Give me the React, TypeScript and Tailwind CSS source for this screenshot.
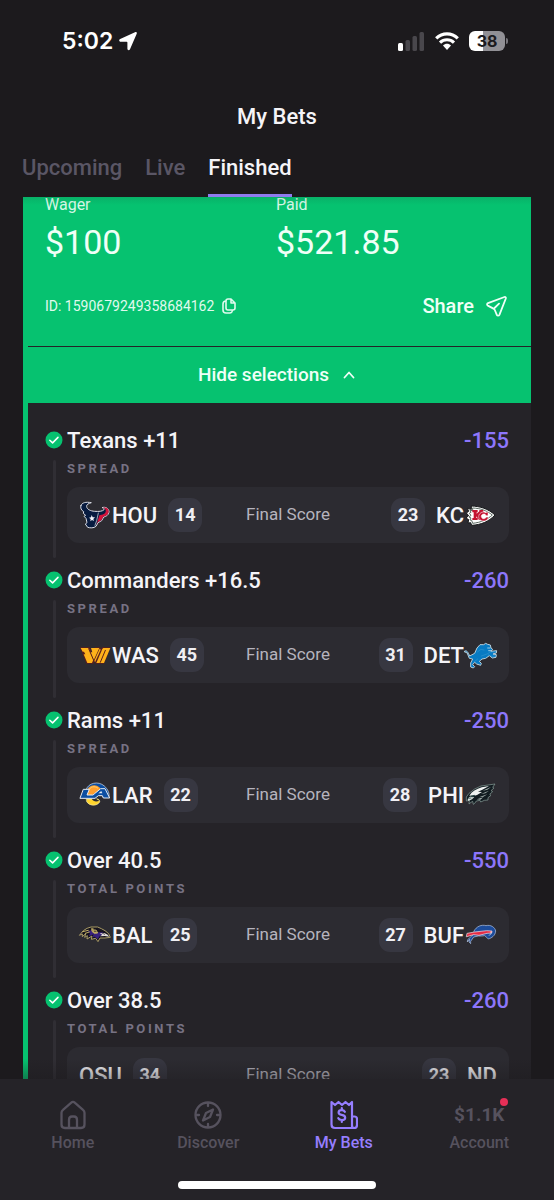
import type { ReactNode } from "react";

function Logo({ children }: { children: ReactNode }) {
  return (
    <svg viewBox="0 0 96 96" className="size-8 shrink-0 overflow-visible" aria-hidden="true" strokeLinejoin="round" strokeLinecap="round">
      {children}
    </svg>
  );
}

function Texans() {
  return (
    <Logo>
      <path d="M6 19 C9 11 20 8 37 11 C28 14 22 16 23 23 C24 31 34 36 47 37 C59 38 71 37 75 32 C78 28 74 26 69 26 C80 22 90 29 90 39 C89 48 82 52 74 54 L68 65 L57 71 L51 82 C44 88 33 87 26 85 L19 75 L24 71 L21 58 L15 52 L20 49 L13 43 L14 38 C7 34 3 27 6 19Z" fill="#071b40" stroke="#d9dbe4" strokeWidth="3" />
      <path d="M52 78 L56 66 L61 49 C72 46 82 44 80 33 C79 29 76 27 72 26 C83 23 90 30 89 39 C88 47 82 51 73 53 L67 64 L57 69Z" fill="#d3133b" />
      <path d="M58 42 L53 65 L48 79" fill="none" stroke="#e8e9ef" strokeWidth="2" />
      <path d="M38 48 L41 55 L48 55 L43 60 L45 66 L39 63 L34 67 L35 60 L30 56 L36 55Z" fill="#f4f5fa" />
    </Logo>
  );
}

function Chiefs() {
  return (
    <Logo>
      <path d="M20 21 C46 22 69 29 90 48 C70 69 48 77 20 79 L17 71 L9 72 L11 62 L3 57 L11 50 L4 42 L11 37 L7 28 L18 31Z" fill="#fff" stroke="#17191a" strokeWidth="3" />
      <path d="M24 27 C47 28 64 34 82 48 C66 62 49 70 23 73 L20 64 L15 63 L18 57 L12 54 L18 49 L13 43 L18 40 L15 34 L22 35Z" fill="#fff" stroke="#5c6a61" strokeWidth="3" />
      <path d="M22 33 H38 V40 H35 V44 L43 37 V33 H55 V40 H51 L42 48 L52 57 V63 H42 L34 52 V57 H38 V63 H22 V57 H26 V40 H22Z" fill="#c41230" />
      <path d="M69 40 V50 H63 C62 44 54 43 50 48 C47 54 50 60 56 59 C60 59 63 57 63 54 H70 C69 63 62 67 54 66 C43 65 38 55 43 46 C48 38 58 37 63 42 L65 39Z" fill="#c41230" stroke="#fff" strokeWidth="1.5" />
    </Logo>
  );
}

function Commanders() {
  return (
    <Logo>
      <path d="M3 25 H33 L40 44 L48 25 H64 L66 30 L69 25 H95 L75 74 H50 L47 67 L43 74 H22Z" fill="#5a1f1c" />
      <path d="M5 27 H29 L43 62 L39 72 H25 L14 46 H19 L15 38 H11Z" fill="#ffb21a" />
      <path d="M36 27 H61 L44 64 L34 40 H40Z" fill="#ffb21a" />
      <path d="M73 27 H94 L75 72 H52 L70 30Z" fill="#ffb21a" />
      <path d="M65 32 L48 70 L46 65 L62 29Z" fill="#ffb21a" />
      <path d="M29 29 L45 66 M79 34 L64 70" stroke="#5a1f1c" strokeWidth="3" />
    </Logo>
  );
}

function Lions() {
  return (
    <Logo>
      <path d="M-2 37 C6 31 10 42 14 51 L29 43 L36 27 L45 17 L56 17 L62 13 L68 16 L76 18 L78 27 L83 31 L78 37 L95 35 L94 42 L84 45 L94 47 L93 55 L82 57 L73 50 L62 58 L51 60 L43 67 L49 73 L47 79 L35 75 L29 70 L23 77 L29 83 L25 87 L17 84 L17 72 L23 60 L13 58 L7 43Z" fill="#087bc3" stroke="#b8ced9" strokeWidth="3" />
      <path d="M37 39 L48 31 L57 33 M49 51 L66 45 L76 39 L90 39 M70 47 L80 52 L89 51 M38 60 L27 69" fill="none" stroke="#3c9bd0" strokeWidth="1.5" />
      <path d="M68 27 L75 27 M71 35 L78 35" stroke="#e8f4f8" strokeWidth="2" />
    </Logo>
  );
}

function Rams() {
  return (
    <Logo>
      <path d="M21 33 C27 11 58 5 76 21 C87 31 92 43 90 55 H72 C73 42 66 32 54 29 C43 27 31 31 21 36Z" fill="#0b4ea2" stroke="#dfe6ef" strokeWidth="2" />
      <path d="M22 42 C24 20 47 12 61 25 C66 30 66 35 62 38 L45 44 L30 55 C24 53 21 49 22 42Z" fill="#ff9f2e" />
      <path d="M28 35 C34 22 47 20 56 27" fill="none" stroke="#ffd36b" strokeWidth="3" />
      <path d="M23 60 H57 C60 62 63 65 62 69 C54 82 31 82 23 68Z" fill="#ffd52e" stroke="#f7ecae" strokeWidth="2" />
      <path d="M38 59 C43 68 52 69 61 65 C51 62 49 57 49 52Z" fill="#2c2b31" />
      <path d="M14 31 H31 L24 48 H42 L65 29 H78 L92 57 H73 L70 50 H58 L48 58 H4Z" fill="#0b4ea2" stroke="#e4ebf3" strokeWidth="3" />
      <path d="M58 43 L67 36 L70 43Z" fill="#e4ebf3" />
    </Logo>
  );
}

function Eagles() {
  return (
    <Logo>
      <path d="M4 65 L4 54 L12 43 L29 30 L48 21 L90 15 L83 25 L87 27 L78 35 L83 38 L74 46 L78 49 L69 56 L69 63 L58 64 L47 69 L45 64 L34 66 L29 73 L25 76 L23 67 L18 70 L12 75 L13 65Z" fill="#111b20" stroke="#8ca39d" strokeWidth="2" />
      <path d="M13 50 C20 38 34 30 50 25 L72 21 L52 32 L39 38 L51 39 L36 48 L26 51Z" fill="#eff2f1" />
      <path d="M53 35 L78 24 L67 32Z M48 45 L72 35 L61 43Z M42 55 L67 46 L55 53Z M35 61 L55 55 L46 62Z" fill="#a9b5b2" />
      <path d="M8 61 C12 52 20 50 28 54 L21 61 L10 66Z" fill="#d6dddb" />
      <path d="M18 51 L29 49 L25 53Z M11 58 L18 57" fill="#0b2a2c" stroke="#0b2a2c" strokeWidth="2" />
    </Logo>
  );
}

function Ravens() {
  return (
    <Logo>
      <path d="M2 48 L13 35 L24 28 L36 24 L56 24 L67 29 L78 35 L89 44 L94 55 L78 57 L63 57 L57 68 L50 58 L37 61 L39 51 L24 60 L25 50 L17 55 L20 44 L10 53 L10 46Z" fill="#15121c" stroke="#a99b65" strokeWidth="3" />
      <path d="M26 37 L47 31 L56 40 L71 40 L79 48 L63 50 L56 61 L48 53 L40 55 L44 46 L30 52 L33 43Z" fill="#38217c" />
      <path d="M62 43 L76 42 L86 47 L91 53 L77 51 L63 52 L70 47Z" fill="#e5e0dc" />
      <path d="M11 38 L28 34 M19 43 L31 39 M39 29 L51 33 L56 42 L46 43 L40 38Z" fill="#b9a75c" stroke="#c1ae65" strokeWidth="3" />
      <path d="M45 32 H51 M46 37 H51 M57 30 L69 36 M69 42 L77 46" stroke="#211a28" strokeWidth="2" />
    </Logo>
  );
}

function Bills() {
  return (
    <Logo>
      <path d="M27 36 C34 22 50 16 63 20 C77 16 90 25 92 36 C91 50 80 57 70 60 L65 55 L59 50 L50 51 L40 51 L26 54 L17 67 L17 74 L12 69 L14 61 L7 69 L8 62 L20 51 L30 43Z" fill="#1d4c9b" stroke="#b9c7e0" strokeWidth="2" />
      <path d="M7 43 L29 39 L65 35 L81 36 L80 42 L66 43 L42 49 L26 47 L5 53Z" fill="#e52b43" stroke="#f5eaf0" strokeWidth="2" />
      <path d="M78 38 V44 L73 49" fill="none" stroke="#fff" strokeWidth="2" />
    </Logo>
  );
}

type Team = { code: string; score: number; logo?: ReactNode };
type Selection = { title: string; market: string; odds: string; away: Team; home: Team };

const selections: Selection[] = [
  { title: "Texans +11", market: "SPREAD", odds: "-155", away: { code: "HOU", score: 14, logo: <Texans /> }, home: { code: "KC", score: 23, logo: <Chiefs /> } },
  { title: "Commanders +16.5", market: "SPREAD", odds: "-260", away: { code: "WAS", score: 45, logo: <Commanders /> }, home: { code: "DET", score: 31, logo: <Lions /> } },
  { title: "Rams +11", market: "SPREAD", odds: "-250", away: { code: "LAR", score: 22, logo: <Rams /> }, home: { code: "PHI", score: 28, logo: <Eagles /> } },
  { title: "Over 40.5", market: "TOTAL POINTS", odds: "-550", away: { code: "BAL", score: 25, logo: <Ravens /> }, home: { code: "BUF", score: 27, logo: <Bills /> } },
  { title: "Over 38.5", market: "TOTAL POINTS", odds: "-260", away: { code: "OSU", score: 34 }, home: { code: "ND", score: 23 } },
];

function Score({ value }: { value: number }) {
  return (
    <span className="flex size-[34px] items-center justify-center rounded-[11px] bg-[#373741] text-lg font-bold text-[#f0eff4]">{value}</span>
  );
}

function SelectionRow({ item }: { item: Selection }) {
  return (
    <li className="flex h-[140px] gap-1 pl-[17px] pr-[22px]">
      <div className="flex w-[18px] shrink-0 flex-col items-center">
        <div className="flex h-7 items-center">
          <svg viewBox="0 0 18 18" className="size-[18px]" aria-label="Won">
            <circle cx="9" cy="9" r="8.5" fill="#06c270" />
            <path d="m4.8 9.2 2.8 2.7 5.4-5.5" fill="none" stroke="#fff" strokeWidth="1.5" strokeLinecap="round" strokeLinejoin="round" />
          </svg>
        </div>
        <div className="mb-2 mt-[6px] w-[3px] flex-1 rounded-full bg-[#302e34]" />
      </div>
      <div className="min-w-0 flex-1">
        <div className="flex h-7 items-center justify-between text-[22px] font-medium">
          <h2 className="text-[#f5f4f8]">{item.title}</h2>
          <span className="text-[#8d76fb]">{item.odds}</span>
        </div>
        <p className="h-[33px] pt-[5px] text-[13px] font-bold leading-5 tracking-[0.2em] text-[#777284]">{item.market}</p>
        <div className="grid h-14 grid-cols-[1fr_auto_1fr] items-center rounded-xl bg-[#2c2b31] px-3">
          <div className="flex items-center gap-[11px]">
            <span className="flex items-center gap-px text-[22px] font-medium text-[#f5f4f8]">{item.away.logo}{item.away.code}</span>
            <Score value={item.away.score} />
          </div>
          <span className="text-[17px] text-[#b6b4be]">Final Score</span>
          <div className="flex items-center justify-end gap-[11px]">
            <Score value={item.home.score} />
            <span className="flex items-center gap-px text-[22px] font-medium text-[#f5f4f8]">{item.home.code}{item.home.logo}</span>
          </div>
        </div>
      </div>
    </li>
  );
}

function StatusBar() {
  return (
    <div className="flex h-[82px] shrink-0 items-center justify-between pl-[62px] pr-[46px] text-white">
      <div className="flex items-center gap-[6px] font-['Inter',sans-serif] text-[23px] font-semibold">
        <span>5:02</span>
        <svg viewBox="0 0 18 20" className="h-5 w-[18px]" aria-hidden="true">
          <path d="M16 1.2C17.3.6 18.2 1.5 17.7 2.8L11 18.2C10.3 19.7 8.4 19.4 8.4 17.8V11.5Q8.4 10.7 7.6 10.7H1.8C0 10.7-.4 8.9 1.2 8.1Z" fill="currentColor" />
        </svg>
      </div>
      <div className="flex items-center gap-[10px]">
        <svg viewBox="0 0 27 19" className="h-[19px] w-[27px]" aria-label="Signal">
          <rect y="11" width="5" height="8" rx="1.5" fill="#fff" />
          <rect x="7.5" y="8" width="4.5" height="11" rx="1.5" fill="#49474c" />
          <rect x="14.5" y="4" width="4.5" height="15" rx="1.5" fill="#49474c" />
          <rect x="21.5" width="4.5" height="19" rx="1.5" fill="#49474c" />
        </svg>
        <svg viewBox="0 0 24 19" className="h-[19px] w-6" fill="none" stroke="#fff" strokeWidth="3.2" aria-label="Wi-Fi">
          <path d="M1.2 6.3C7.5.3 16.5.3 22.8 6.3M5 10.6C9 6.8 15 6.8 19 10.6" />
          <path d="M8 13.4C10.2 11.2 13.8 11.2 16 13.4L12 18Z" fill="#fff" stroke="none" />
        </svg>
        <div className="flex items-center gap-px">
          <span className="flex h-5 w-9 items-center justify-center rounded-[6px] bg-linear-to-r from-white from-40% to-[#919095] to-40% font-['Inter',sans-serif] text-base font-bold text-[#1c1a1d]">38</span>
          <span className="h-[6px] w-[2px] rounded-r-full bg-[#77757b]" />
        </div>
      </div>
    </div>
  );
}

function NavItem({ label, active = false, children }: { label: string; active?: boolean; children: ReactNode }) {
  return (
    <a href={"#" + label.toLowerCase().replace(" ", "-")} aria-current={active ? "page" : undefined} className={active ? "flex flex-1 flex-col items-center gap-[3px] font-medium text-[#967eff]" : "flex flex-1 flex-col items-center gap-[3px] font-medium text-[#56525e]"}>
      <span className="flex h-[30px] items-center">{children}</span>
      <span className="text-base leading-5">{label}</span>
    </a>
  );
}

export default function App() {
  return (
    <div className="flex h-dvh min-h-[480px] flex-col bg-[#1c1a1d] font-['Roboto',sans-serif] text-white">
      <StatusBar />
      <header className="shrink-0 px-[22px]">
        <h1 className="flex h-[68px] items-center justify-center text-[22px] font-medium text-[#f5f4f8]">My Bets</h1>
        <div role="tablist" className="flex h-[47px] gap-[23px] text-[22px] font-medium text-[#5a5665]">
          <button type="button" role="tab" aria-selected="false" className="flex items-start pt-px">Upcoming</button>
          <button type="button" role="tab" aria-selected="false" className="flex items-start pt-px">Live</button>
          <button type="button" role="tab" aria-selected="true" className="flex items-start border-b-[3px] border-[#8f7bee] pt-px text-[#f5f4f8]">Finished</button>
        </div>
      </header>

      <main className="relative min-h-0 flex-1 overflow-hidden px-[23px]">
        <article className="border-l-[5px] border-[#06c270] bg-[#252328]">
          <section className="bg-[#06c270] text-[#effff7]">
            <div className="h-[149px] pl-[17px] pr-[24px]">
              <dl className="grid grid-cols-2">
                <div>
                  <dt className="text-base leading-[15px] text-[#d5f8e7]">Wager</dt>
                  <dd className="mt-2 text-[34px] leading-11">$100</dd>
                </div>
                <div>
                  <dt className="text-base leading-[15px] text-[#d5f8e7]">Paid</dt>
                  <dd className="mt-2 text-[34px] leading-11">$521.85</dd>
                </div>
              </dl>
              <div className="mt-7 flex items-center justify-between">
                <button type="button" className="flex items-center gap-2 text-sm text-[#e0faee]">
                  ID: 1590679249358684162
                  <svg viewBox="0 0 14 16" className="h-4 w-[14px]" fill="none" stroke="currentColor" strokeWidth="1.6" strokeLinecap="round" strokeLinejoin="round" aria-label="Copy">
                    <path d="M6 1H9L13 5V10A2 2 0 0 1 11 12H6A2 2 0 0 1 4 10V3A2 2 0 0 1 6 1ZM9 1V5H13M4 3A3 3 0 0 0 1 6V12A3 3 0 0 0 4 15H8A3 3 0 0 0 10.5 12.5" />
                  </svg>
                </button>
                <button type="button" className="flex items-center gap-3 text-xl font-medium">
                  Share
                  <svg viewBox="0 0 21 21" className="size-[21px]" fill="none" stroke="currentColor" strokeWidth="1.8" strokeLinecap="round" strokeLinejoin="round" aria-hidden="true">
                    <path d="M18.5 1 2 7.2C.8 7.7.8 9 1.8 9.6L7 12.4C8 12.9 8.4 13.1 8.8 14L10.8 18.8C11.3 20 12.8 20 13.4 18.8L19.8 2.5C20.1 1.5 19.4.7 18.5 1ZM8 12.5 13 7.7" />
                  </svg>
                </button>
              </div>
            </div>
            <button type="button" className="flex h-[57px] w-full items-center justify-center gap-[14px] border-t border-[#252328] pr-[6px] text-[19px] font-medium">
              Hide selections
              <svg viewBox="0 0 12 8" className="h-2 w-3" fill="none" stroke="currentColor" strokeWidth="1.8" strokeLinecap="round" strokeLinejoin="round" aria-hidden="true"><path d="m1.5 6.5 4.5-5 4.5 5" /></svg>
            </button>
          </section>
          <ul className="pt-[23px]">
            {selections.map((item) => <SelectionRow key={item.title} item={item} />)}
          </ul>
        </article>
        <div className="pointer-events-none absolute inset-x-0 bottom-0 h-5 bg-linear-to-t from-[#1c1a1d]/40 to-transparent" />
        <div className="pointer-events-none absolute inset-x-0 top-0 h-2 bg-linear-to-b from-[#1c1a1d]/10 to-transparent" />
      </main>

      <footer className="flex h-[121px] shrink-0 flex-col items-center justify-between bg-[#252328] pb-[11px] pt-[21px]">
        <nav className="flex w-full pl-[5px] pr-[7px]">
          <NavItem label="Home">
            <svg viewBox="0 0 26 30" className="h-[30px] w-[26px]" fill="none" stroke="currentColor" strokeWidth="2.3" strokeLinejoin="round" aria-hidden="true">
              <path d="M1.5 12.8Q1.5 11 3 9.8L11 2.8Q13 1 15 2.8L23 9.8Q24.5 11 24.5 12.8V24.5Q24.5 28 21 28H5Q1.5 28 1.5 24.5ZM9 28V20Q9 16.5 12 16.5H14Q17 16.5 17 20V28" />
            </svg>
          </NavItem>
          <NavItem label="Discover">
            <svg viewBox="0 0 28 30" className="h-[30px] w-7" fill="none" stroke="currentColor" strokeWidth="2.3" strokeLinecap="round" strokeLinejoin="round" aria-hidden="true">
              <circle cx="14" cy="15" r="12.5" />
              <path d="M14 3V6M14 24V27M2 15H5M23 15H26M19 9.5 12 13 9 20.5 16 17Z" />
            </svg>
          </NavItem>
          <NavItem label="My Bets" active>
            <svg viewBox="0 0 28 30" className="h-[30px] w-7" fill="none" stroke="currentColor" strokeWidth="2.2" strokeLinecap="round" strokeLinejoin="round" aria-hidden="true">
              <path d="M1.5 2 5 5 8.5 2 12 5 15.5 2 19 5 22 2V28H5Q1.5 28 1.5 24.5ZM22 16.5H24.5Q27 16.5 27 19V25Q27 28 24 28Q22 28 22 25M14.8 11.8Q14 10.2 11.7 10.2 8.6 10.2 8.6 12.5 8.6 14.4 11.7 14.9 15.2 15.5 15.2 17.7 15.2 20 11.8 20 9 20 8.3 18.2M11.8 8V10M11.8 20V22" />
            </svg>
          </NavItem>
          <NavItem label="Account">
            <span className="relative text-[19px] font-bold">
              $1.1K
              <span className="absolute -right-1 -top-[3px] size-2 rounded-full bg-[#e62f57]" />
            </span>
          </NavItem>
        </nav>
        <div className="h-2 w-[198px] rounded-full bg-white" />
      </footer>
    </div>
  );
}
